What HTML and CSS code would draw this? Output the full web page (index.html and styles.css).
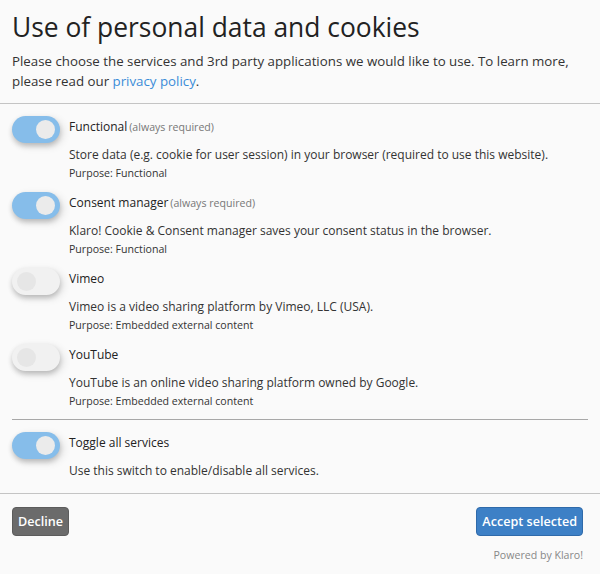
FILE: index.html
```html
<!DOCTYPE html>
<html lang="en">
<head>
<meta charset="utf-8">
<title>Use of personal data and cookies</title>
<link rel="stylesheet" href="styles.css">
</head>
<body>
<div class="modal">
  <header class="head">
    <h1 class="title">Use of personal data and cookies</h1>
    <p class="intro">Please choose the services and 3rd party applications we would like to use. To learn more, please read our <a href="#" class="link">privacy policy</a>.</p>
  </header>
  <div class="body">
    <ul class="services">
      <li class="service">
        <span class="switch on"><span class="knob"></span></span>
        <div class="info">
          <div class="name">Functional<span class="req">(always required)</span></div>
          <p class="desc">Store data (e.g. cookie for user session) in your browser (required to use this website).</p>
          <p class="purpose">Purpose: Functional</p>
        </div>
      </li>
      <li class="service">
        <span class="switch on"><span class="knob"></span></span>
        <div class="info">
          <div class="name">Consent manager<span class="req">(always required)</span></div>
          <p class="desc">Klaro! Cookie &amp; Consent manager saves your consent status in the browser.</p>
          <p class="purpose">Purpose: Functional</p>
        </div>
      </li>
      <li class="service">
        <span class="switch off"><span class="knob"></span></span>
        <div class="info">
          <div class="name">Vimeo</div>
          <p class="desc">Vimeo is a video sharing platform by Vimeo, LLC (USA).</p>
          <p class="purpose">Purpose: Embedded external content</p>
        </div>
      </li>
      <li class="service">
        <span class="switch off"><span class="knob"></span></span>
        <div class="info">
          <div class="name">YouTube</div>
          <p class="desc">YouTube is an online video sharing platform owned by Google.</p>
          <p class="purpose">Purpose: Embedded external content</p>
        </div>
      </li>
    </ul>
    <div class="toggle-all">
      <span class="switch on"><span class="knob"></span></span>
      <div class="info">
        <div class="name">Toggle all services</div>
        <p class="desc">Use this switch to enable/disable all services.</p>
      </div>
    </div>
  </div>
  <footer class="foot">
    <div class="buttons">
      <button class="btn decline">Decline</button>
      <button class="btn accept">Accept selected</button>
    </div>
    <p class="powered">Powered by Klaro!</p>
  </footer>
</div>
</body>
</html>
```

FILE: styles.css
```css
* { box-sizing: border-box; }
html, body { margin: 0; padding: 0; }
body {
  background: #fafafa;
  font-family: "Open Sans", "Noto Sans", sans-serif;
  color: #333;
  width: 600px;
  height: 574px;
  overflow: hidden;
}
.head {
  padding: 10px 12px 12px;
  border-bottom: 1px solid #c4c4c4;
}
.title {
  margin: 0;
  font-size: 26.4px;
  line-height: 34px;
  font-weight: 400;
  color: #222;
}
.intro {
  margin: 7px 0 0;
  font-size: 13.3px;
  line-height: 20px;
  color: #333;
}
.link { color: #3b8cd8; text-decoration: none; }
.body { padding: 13px 12px 0; }
.services {
  list-style: none;
  margin: 0;
  padding: 0;
  border-bottom: 1px solid #a8a8a8;
}
.service {
  display: flex;
  gap: 9px;
  margin-bottom: 12px;
}
.service:last-child { margin-bottom: 10px; }
.toggle-all {
  display: flex;
  gap: 9px;
  padding: 13px 0 12px;
}
.switch {
  flex: none;
  position: relative;
  width: 48px;
  height: 27px;
  border-radius: 14px;
  margin-top: -1px;
  box-shadow: 0 3px 5px rgba(0,0,0,.18), 3px 3px 8px rgba(0,0,0,.12);
}
.switch.on { background: #86bdea; }
.switch.off { background: #f1f1f1; }
.knob {
  position: absolute;
  top: 4px;
  width: 19px;
  height: 19px;
  border-radius: 50%;
  background: #ebebeb;
}
.switch.on .knob { left: 24px; }
.switch.off .knob { left: 5px; background: #e6e6e6; }
.info { flex: 1; }
.name {
  font-size: 12px;
  line-height: 20px;
  color: #222;
}
.req {
  margin-left: 2px;
  font-size: 10.6px;
  color: #777;
}
.desc {
  margin: 8px 0 0;
  font-size: 12px;
  line-height: 20px;
  color: #333;
}
.purpose {
  margin: 0;
  font-size: 10.6px;
  line-height: 16px;
  color: #333;
}
.foot {
  border-top: 1px solid #c4c4c4;
  padding: 13px 17px 0 12px;
}
.buttons {
  display: flex;
  justify-content: space-between;
}
.btn {
  font-family: inherit;
  font-size: 12.6px;
  font-weight: 600;
  color: #fff;
  height: 29px;
  padding: 0 5px;
  border-radius: 4px;
  cursor: pointer;
}
.decline { background: #6b6b6b; border: 1px solid #5c5c5c; }
.accept { background: #3d80c6; border: 1px solid #2f6aaa; }
.powered {
  margin: 11px 0 0;
  text-align: right;
  font-size: 10.6px;
  line-height: 16px;
  color: #888;
}
```
